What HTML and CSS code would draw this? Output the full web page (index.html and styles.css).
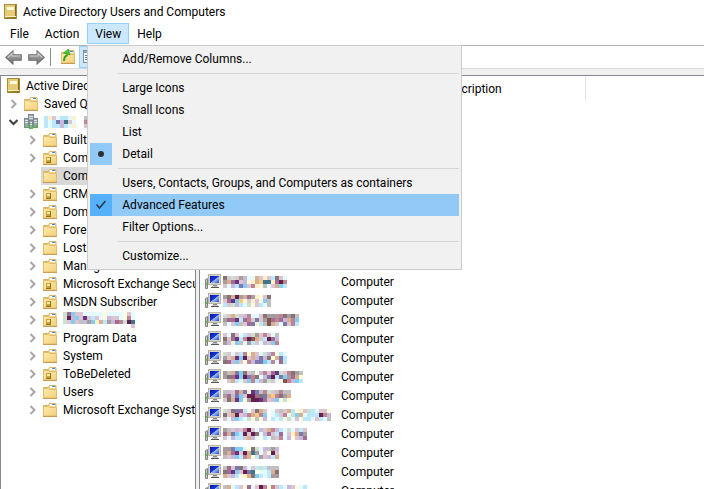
FILE: index.html
```html
<!DOCTYPE html>
<html lang="en">
<head>
    <meta charset="UTF-8">
    <meta name="viewport" content="width=device-width, initial-scale=1.0">
    <title>Active Directory Users and Computers</title>
    <link rel="stylesheet" href="styles.css">
</head>
<body>
    <!-- shared icons -->
    <svg class="defs" aria-hidden="true">
        <defs>
            <linearGradient id="gold" x1="0" y1="0" x2="1" y2="1">
                <stop offset="0" stop-color="#ffeaac"/>
                <stop offset="1" stop-color="#f2d07c"/>
            </linearGradient>
            <linearGradient id="book" x1="0" y1="0" x2="1" y2="0">
                <stop offset="0" stop-color="#e8c840"/>
                <stop offset="1" stop-color="#806010"/>
            </linearGradient>
            <linearGradient id="screen" x1="0" y1="0" x2="1" y2="1">
                <stop offset="0" stop-color="#0414a8"/>
                <stop offset="0.5" stop-color="#1838d8"/>
                <stop offset="0.55" stop-color="#a0c0f8"/>
                <stop offset="1" stop-color="#2040d0"/>
            </linearGradient>
            <linearGradient id="steel" x1="0" y1="0" x2="0" y2="1">
                <stop offset="0" stop-color="#b4b4b4"/>
                <stop offset="1" stop-color="#707070"/>
            </linearGradient>
            <symbol id="i-console" viewBox="0 0 16 16">
                <rect x="0.5" y="0.5" width="12" height="14" fill="url(#book)" stroke="#a88c3c"/>
                <rect x="1" y="1" width="10" height="11" fill="#e6cc78"/>
                <rect x="3" y="3" width="7" height="3" fill="#fffbe2"/>
                <path d="M1 12.5h11" stroke="#fff4c4"/>
                <path d="M1 14h11" stroke="#8a6a1c"/>
            </symbol>
            <symbol id="i-folder" viewBox="0 0 16 16">
                <path d="M1.5 5V3.500h5l1-2h6.500v4z" fill="#f6dc94" stroke="#d8b468"/>
                <rect x="8" y="2" width="5" height="2" fill="#fff"/>
                <rect x="10" y="2" width="3" height="1" fill="#3c90e0"/>
                <path d="M1.500 4.500h5l1 1h7v8.500h-13z" fill="url(#gold)" stroke="#e2bc68"/>
                <path d="M1 14.500h14" stroke="#c89c50"/>
            </symbol>
            <symbol id="i-ou" viewBox="0 0 16 16">
                <use href="#i-folder"/>
                <rect x="4" y="7" width="5" height="5" fill="#c8a440"/>
                <rect x="5" y="8" width="3" height="2" fill="#f8e8a0"/>
                <path d="M8.500 7v6M4 12.500h5" stroke="#8c7020"/>
            </symbol>
            <symbol id="i-domain" viewBox="0 0 16 16">
                <g fill="#9ca6aa" stroke="#7c8a90">
                    <rect x="5.500" y="0.500" width="5" height="9"/>
                    <rect x="1.500" y="4.500" width="4" height="9"/>
                    <rect x="10.500" y="4.500" width="4" height="9"/>
                    <rect x="6.500" y="6.500" width="3" height="8"/>
                </g>
                <path d="M6 2.500h4M6 4.500h4M2 6.500h3M2 8.500h3M11 6.500h3M11 8.500h3M7 8.500h2M7 10.500h2" stroke="#dce4e6"/>
                <path d="M4 11h2v2H4zM8 13h2v2H8zM12 11h2v2h-2z" fill="#38e010"/>
            </symbol>
            <symbol id="i-computer" viewBox="0 0 16 16">
                <path d="M0.500 5.500l2-1v10h-2z" fill="#c4c4c0" stroke="#84847f"/>
                <path d="M1 9h1v2H1z" fill="#40e020"/>
                <rect x="3.500" y="0.500" width="12" height="10" fill="#d8d4c8" stroke="#b8b4a8"/>
                <rect x="5" y="2" width="9" height="7" fill="url(#screen)"/>
                <path d="M8 11h4v2H8z" fill="#888"/>
                <path d="M6 13.500h8" stroke="#585858"/>
                <path d="M7 12.500h6" stroke="#c4c4c4"/>
            </symbol>
            <symbol id="i-right" viewBox="0 0 9 10">
                <path d="M2.500 1l4 4-4 4" fill="none" stroke="#a6a6a6" stroke-width="2"/>
            </symbol>
            <symbol id="i-down" viewBox="0 0 9 10">
                <path d="M0.500 3l4 4 4-4" fill="none" stroke="#404040" stroke-width="2"/>
            </symbol>
            <symbol id="i-arrow" viewBox="0 0 16 14">
                <path d="M0.800 7L7.500 0.800V4.500h7.800v5H7.500v3.700z" fill="url(#steel)" stroke="#6c6c6c"/>
                <path d="M2.500 7l4-3.800v2.300h7.800" fill="none" stroke="#d0d0d0"/>
            </symbol>
        </defs>
    </svg>

    <div class="window">
        <header class="title-bar">
            <svg class="icon"><use href="#i-console"/></svg>
            <span>Active Directory Users and Computers</span>
        </header>

        <nav class="menu-bar">
            <button class="menu-button">File</button>
            <button class="menu-button">Action</button>
            <div class="menu-wrap">
                <button class="menu-button open" aria-haspopup="true" aria-expanded="true">View</button>
                <div class="menu" role="menu">
                    <button class="menu-item" role="menuitem"><span class="mark"></span>Add/Remove Columns...</button>
                    <hr>
                    <button class="menu-item" role="menuitemradio" aria-checked="false"><span class="mark"></span>Large Icons</button>
                    <button class="menu-item" role="menuitemradio" aria-checked="false"><span class="mark"></span>Small Icons</button>
                    <button class="menu-item" role="menuitemradio" aria-checked="false"><span class="mark"></span>List</button>
                    <button class="menu-item" role="menuitemradio" aria-checked="true"><span class="mark on"><svg width="22" height="22"><circle cx="11" cy="11" r="3" fill="#303030"/></svg></span>Detail</button>
                    <hr>
                    <button class="menu-item" role="menuitem"><span class="mark"></span>Users, Contacts, Groups, and Computers as containers</button>
                    <button class="menu-item active" role="menuitemcheckbox" aria-checked="true"><span class="mark"><svg width="22" height="22"><path d="M6.500 10.500l3 3.500 6-7" fill="none" stroke="#2c3c4c" stroke-width="1.600"/></svg></span>Advanced Features</button>
                    <button class="menu-item" role="menuitem"><span class="mark"></span>Filter Options...</button>
                    <hr>
                    <button class="menu-item" role="menuitem"><span class="mark"></span>Customize...</button>
                </div>
            </div>
            <button class="menu-button">Help</button>
        </nav>

        <div class="toolbar">
            <button class="tool" aria-label="Back"><svg class="arrow"><use href="#i-arrow"/></svg></button>
            <button class="tool" aria-label="Forward"><svg class="arrow forward"><use href="#i-arrow"/></svg></button>
            <span class="divider"></span>
            <button class="tool" aria-label="Up one level">
                <svg class="icon" viewBox="0 0 16 16">
                    <use href="#i-folder"/>
                    <path d="M4 12c0-3 1-5 3.500-6" fill="none" stroke="#30a020" stroke-width="2"/>
                    <path d="M3.500 4l5-4 1.500 6z" fill="#48c830" stroke="#259018" stroke-width="0.600"/>
                </svg>
            </button>
            <button class="tool pressed" aria-label="Show console tree">
                <svg class="icon" viewBox="0 0 16 16">
                    <rect x="0.500" y="1.500" width="14" height="12" fill="#fff" stroke="#8090a0"/>
                    <path d="M1 3h13" stroke="#98a8b8" stroke-width="2"/>
                    <path d="M2 6.500h3M2 8.500h3M2 10.500h3" stroke="#5080b0"/>
                </svg>
            </button>
        </div>

        <main class="panes">
            <ul class="tree">
                <li class="root"><svg class="icon"><use href="#i-console"/></svg><span>Active Directory</span></li>
                <li><svg class="chevron"><use href="#i-right"/></svg><svg class="icon"><use href="#i-folder"/></svg><span>Saved Queries</span></li>
                <li><svg class="chevron"><use href="#i-down"/></svg><svg class="icon"><use href="#i-domain"/></svg><span class="mosaic" data-name="domain"></span></li>
                <li class="child"><svg class="chevron"><use href="#i-right"/></svg><svg class="icon"><use href="#i-folder"/></svg><span>Builtin</span></li>
                <li class="child"><svg class="chevron"><use href="#i-right"/></svg><svg class="icon"><use href="#i-ou"/></svg><span>Computers</span></li>
                <li class="child selected"><svg class="chevron"></svg><svg class="icon"><use href="#i-folder"/></svg><span>Computers</span></li>
                <li class="child"><svg class="chevron"><use href="#i-right"/></svg><svg class="icon"><use href="#i-ou"/></svg><span>CRM</span></li>
                <li class="child"><svg class="chevron"><use href="#i-right"/></svg><svg class="icon"><use href="#i-ou"/></svg><span>Domain</span></li>
                <li class="child"><svg class="chevron"><use href="#i-right"/></svg><svg class="icon"><use href="#i-folder"/></svg><span>Foreign</span></li>
                <li class="child"><svg class="chevron"><use href="#i-right"/></svg><svg class="icon"><use href="#i-folder"/></svg><span>LostAnd</span></li>
                <li class="child"><svg class="chevron"><use href="#i-right"/></svg><svg class="icon"><use href="#i-folder"/></svg><span>Managed</span></li>
                <li class="child"><svg class="chevron"><use href="#i-right"/></svg><svg class="icon"><use href="#i-ou"/></svg><span>Microsoft Exchange Security</span></li>
                <li class="child"><svg class="chevron"><use href="#i-right"/></svg><svg class="icon"><use href="#i-ou"/></svg><span>MSDN Subscriber</span></li>
                <li class="child"><svg class="chevron"><use href="#i-right"/></svg><svg class="icon"><use href="#i-ou"/></svg><span class="mosaic" data-name="unit"></span></li>
                <li class="child"><svg class="chevron"><use href="#i-right"/></svg><svg class="icon"><use href="#i-folder"/></svg><span>Program Data</span></li>
                <li class="child"><svg class="chevron"><use href="#i-right"/></svg><svg class="icon"><use href="#i-folder"/></svg><span>System</span></li>
                <li class="child"><svg class="chevron"><use href="#i-right"/></svg><svg class="icon"><use href="#i-ou"/></svg><span>ToBeDeleted</span></li>
                <li class="child"><svg class="chevron"><use href="#i-right"/></svg><svg class="icon"><use href="#i-folder"/></svg><span>Users</span></li>
                <li class="child"><svg class="chevron"><use href="#i-right"/></svg><svg class="icon"><use href="#i-folder"/></svg><span>Microsoft Exchange System</span></li>
            </ul>

            <div class="list">
                <table>
                    <colgroup><col class="col-name"><col class="col-type"><col class="col-desc"><col></colgroup>
                    <thead>
                        <tr><th></th><th></th><th class="last">Description</th><th></th></tr>
                    </thead>
                    <tbody id="rows"></tbody>
                </table>
            </div>
        </main>
    </div>

    <script src="script.js"></script>
</body>
</html>
```
FILE: styles.css
```css
* {
    box-sizing: border-box;
}

body {
    margin: 0;
    font-family: Roboto, "Noto Sans", sans-serif;
    font-size: 12px;
    line-height: 18px;
    color: #000;
    background-color: #fff;
}

button {
    font: inherit;
    color: inherit;
    border: none;
    background: none;
    padding: 0;
}

.defs {
    position: absolute;
    width: 0;
    height: 0;
}

.icon {
    width: 16px;
    height: 16px;
    flex: none;
}

.window {
    display: flex;
    flex-direction: column;
    height: 100vh;
    overflow: hidden;
}

.title-bar {
    display: flex;
    align-items: center;
    gap: 3px;
    height: 23px;
    padding-left: 4px;
}

/* menu bar */
.menu-bar {
    display: flex;
    height: 23px;
    padding-left: 2px;
    border-bottom: 1px solid #b4b4b8;
}

.menu-button {
    height: 21px;
    padding: 0 7px;
    border: 1px solid transparent;
}

.menu-button.open {
    background-color: #cce8ff;
    border-color: #99d1ff;
}

.menu-wrap {
    position: relative;
}

.menu {
    position: absolute;
    top: 22px;
    left: 0;
    z-index: 1;
    width: 375px;
    padding: 2px;
    background-color: #f1f1f1;
    border: 1px solid #ccc;
}

.menu hr {
    height: 1px;
    margin: 3px 0 3px 28px;
    border: none;
    background-color: #d7d7d7;
}

.menu-item {
    display: flex;
    align-items: center;
    gap: 10px;
    width: 100%;
    height: 22px;
    white-space: nowrap;
}

.menu-item.active {
    background-color: #91c9f7;
}

.mark {
    width: 22px;
    height: 22px;
    flex: none;
}

.mark.on {
    background-color: #91c9f7;
}

.active .mark {
    background-color: #56b0fa;
}

/* toolbar */
.toolbar {
    display: flex;
    align-items: center;
    flex: none;
    height: 23px;
    padding-left: 2px;
    border-bottom: 1px solid #d9d9d9;
}

.tool {
    display: flex;
    align-items: center;
    justify-content: center;
    width: 23px;
    height: 22px;
}

.tool.pressed {
    background-color: #cce8ff;
    border: 1px solid #99d1ff;
}

.arrow {
    width: 17px;
    height: 15px;
}

.arrow.forward {
    transform: scaleX(-1);
}

.divider {
    width: 1px;
    height: 18px;
    margin: 0 5px 0 2px;
    background-color: #8c8c8c;
}

/* panes */
.panes {
    display: flex;
    gap: 3px;
    flex: 1;
    min-height: 0;
    padding-top: 6px;
    background-color: #f0f0f0;
}

.tree {
    width: 196px;
    flex: none;
    margin: 0;
    padding: 1px 0 0;
    list-style: none;
    overflow: hidden;
    background-color: #fff;
    border: 1px solid #828790;
    border-bottom: none;
}

.tree li {
    display: flex;
    align-items: center;
    height: 18px;
    padding-left: 8px;
    white-space: nowrap;
}

.tree .root {
    padding-left: 6px;
}

.tree .child {
    padding-left: 27px;
}

.tree .icon {
    margin-right: 5px;
}

.tree .root .icon {
    margin-right: 3px;
}

.chevron {
    width: 9px;
    height: 10px;
    margin-right: 5px;
    flex: none;
}

.tree .selected {
    background: linear-gradient(to right, #fff 40px, #d9d9d9 40px);
}

.list {
    flex: 1;
    min-width: 0;
    overflow: hidden;
    background-color: #fff;
    border-top: 1px solid #828790;
    border-left: 1px solid #828790;
}

table {
    width: 100%;
    table-layout: fixed;
    border-collapse: collapse;
}

.col-name {
    width: 136px;
}

.col-type {
    width: 100px;
}

.col-desc {
    width: 149px;
}

th {
    height: 25px;
    padding: 0 5px;
    font-weight: normal;
    text-align: left;
}

.last {
    border-right: 1px solid #e5e5e5;
}

td {
    height: 19px;
    padding: 0 5px;
}

.name {
    display: flex;
    align-items: center;
    gap: 2px;
    height: 19px;
}

.mosaic svg {
    display: block;
}
```
FILE: script.js
```js
// Names are masked: each letter is one 4px cell of the mosaic
const palette = {
    a: '#a89c9c', d: '#847478', p: '#dcc4d0', m: '#a06c90', k: '#64204c',
    b: '#bce8ff', s: '#84ccf0', n: '#7c78b0', c: '#fff0cc', t: '#d8b090',
    y: '#fffde0', l: '#c8b8dc', g: '#c0c0c0', e: '#40748c', r: '#bc8494',
    i: '#e4faff', o: '#805850', u: '#683484', h: '#cce0d0', f: '#ffc880'
};

const names = {
    domain: ['bcpibbic  gplta', 'bibnlepi  rtgtb', 'bibblbic  pptlb'],
    unit: ['hmsppiiiiiyiiiiypi', 'hklspupbpiylppiyri', 'hpspglasctbalmrhke', '                 p'],
};

const computers = [
    ['dphpaliitpcpbdpi', 'atmuplyctfeecmkr', 'pilbnsprcygiptsb'],
    ['adtkatmacypd', 'pmusfypcpysg', 'bphlbihypbig'],
    ['hpthplriipdaaardadg', 'ammubmrpnpaomrmltrs', 'gipsgpmncbgotpinprb'],
    ['pidpibphaprpig', 'dpmubrkotpbkml', 'alcsgiabpilpsr'],
    ['hpipbrytpihlrybi', 'aptuskptlnldytnb', 'dmlspyrlnnsbrimb'],
    ['agtnsdpgylrpmuhprdag', 'admusknrdilnkbnsamty', ' ptbipsrblahpiyorlsb'],
    ['glpmtncungrhpgrgg', 'amgnspkkmdntfrdat', 'pdtusyakkumplsyhy'],
    ['hpdnmbypdtp ipgptbycphbippy', 'dptkplrtfrs ibprihstibbbkrl', 'pilsbihygyl bibyhipybbipbig'],
    ['agplprkpilptrlbihipbp', 'mtnsbkpkdilmpbmipctna', 'pilbbptliybigprilyplm'],
    ['aanssiydhilgal', 'atmupkteaipykp', 'gplsbrtybaplbt'],
    ['gmpndlipbhbggg', 'dmuspkneyiibtd', 'tplbyctdsbibaa'],
    ['gtibpymipkryrpbilpyib', 'damusprtfnlbptnilpmyt', 'pplsbiytpiblpygprybil'],
];

function mosaic(lines) {
    const width = Math.max(...lines.map(line => line.length)) * 4;
    let cells = '';
    lines.forEach((line, y) => {
        [...line].forEach((key, x) => {
            if (palette[key]) {
                cells += `<rect x="${x * 4}" y="${y * 4}" width="4" height="4" fill="${palette[key]}"/>`;
            }
        });
    });
    return `<svg width="${width}" height="${lines.length * 4}" shape-rendering="crispEdges">${cells}</svg>`;
}

document.querySelectorAll('[data-name]').forEach(el => {
    el.innerHTML = mosaic(names[el.dataset.name]);
});

// The first nine entries sit under the open View menu
const empty = '<tr><td></td><td></td><td></td><td></td></tr>'.repeat(9);

document.getElementById('rows').innerHTML = empty + computers.map(lines => `
    <tr>
        <td><div class="name"><svg class="icon"><use href="#i-computer"/></svg><span class="mosaic">${mosaic(lines)}</span></div></td>
        <td>Computer</td>
        <td></td>
        <td></td>
    </tr>`).join('');
```
